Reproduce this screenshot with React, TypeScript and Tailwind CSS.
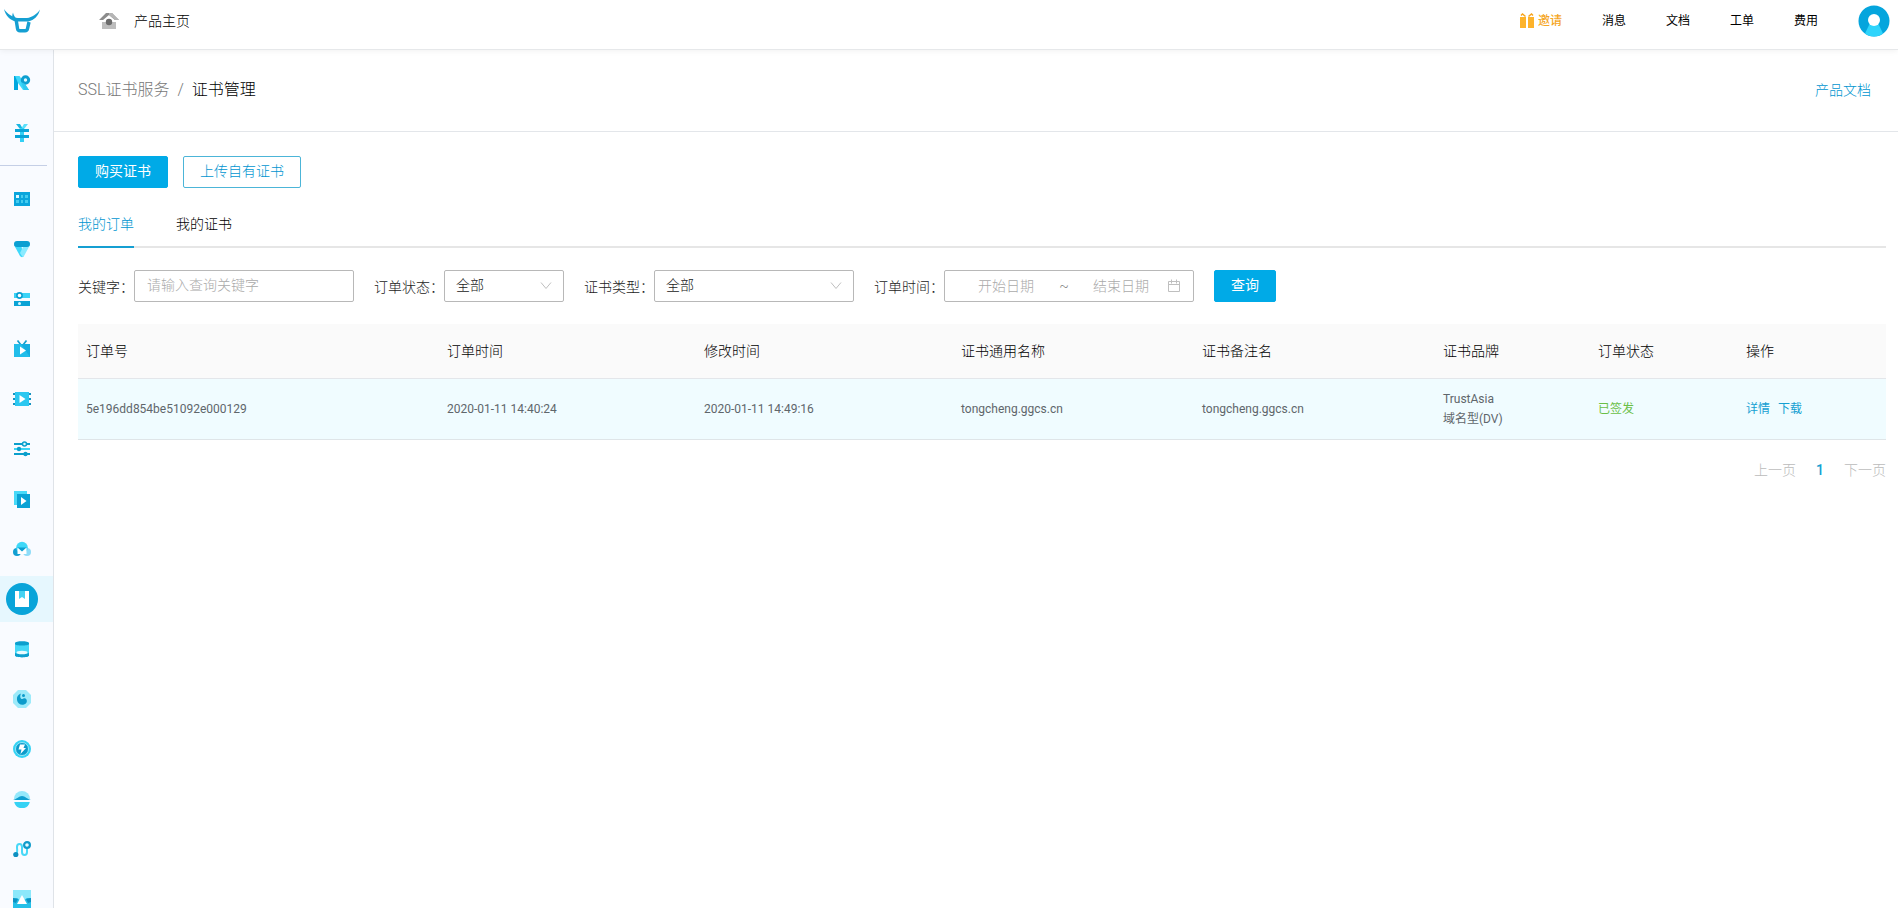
import { useState } from "react";
import type { ReactNode } from "react";

const topLinks = ["消息", "文档", "工单", "费用"];

const columns = [
  { label: "订单号", width: "w-[361px]" },
  { label: "订单时间", width: "w-[257px]" },
  { label: "修改时间", width: "w-[257px]" },
  { label: "证书通用名称", width: "w-[241px]" },
  { label: "证书备注名", width: "w-[241px]" },
  { label: "证书品牌", width: "w-[155px]" },
  { label: "订单状态", width: "w-[148px]" },
  { label: "操作", width: "w-[148px]" },
];

const orders = [
  {
    id: "5e196dd854be51092e000129",
    createdAt: "2020-01-11 14:40:24",
    updatedAt: "2020-01-11 14:49:16",
    commonName: "tongcheng.ggcs.cn",
    remark: "tongcheng.ggcs.cn",
    brand: "TrustAsia",
    type: "域名型(DV)",
    status: "已签发",
  },
];

const Svg = ({ children }: { children: ReactNode }) => (
  <svg viewBox="0 0 18 18" className="w-[18px] h-[18px]" aria-hidden="true">
    {children}
  </svg>
);

const accountIcons = [
  {
    name: "资源",
    icon: (
      <Svg>
        <path d="M1 2h4v14H1z" fill="#00a7de" />
        <path d="M2 2h4.500l9.500 14h-6L5 9z" fill="#3fd8fa" />
        <circle cx="12.500" cy="6" r="3.200" fill="#dff8ff" stroke="#0e9fd0" strokeWidth="3" />
        <path d="M8 8l4 2 4 6h-5z" fill="#2fc9f0" />
      </Svg>
    ),
  },
  {
    name: "费用",
    icon: (
      <Svg>
        <path d="M3 0h4l3 5H7z" fill="#18b6e2" />
        <path d="M11 0h4l-4 5H8z" fill="#5be0fb" />
        <path d="M7 4h4v14H7z" fill="#33d0f5" />
        <path d="M2 5h14v3H2zM2 11h14v3H2z" fill="#0aa5d8" />
      </Svg>
    ),
  },
];

const productIcons = [
  {
    name: "云主机",
    icon: (
      <Svg>
        <path d="M1 2h16v14H1z" fill="#0aa5dc" />
        <path d="M3 5h3v3H3z" fill="#e2f9ff" />
        <path d="M8 5h2v3H8zM12 5h3v3h-3zM3 10h3v3H3zM8 10h2v3H8zM12 10h3v3h-3z" fill="#45ccef" />
      </Svg>
    ),
  },
  {
    name: "对象存储",
    icon: (
      <Svg>
        <path d="M1 5l6 11c1 1.500 3 1.500 4 0L8 5z" fill="#3fd8fa" />
        <path d="M17 5l-6 11c-1 1-2 1-2 0l-2-3 4-8z" fill="#8aeaff" />
        <rect x="1" y="1" width="16" height="6" rx="3" fill="#0b9fd2" />
      </Svg>
    ),
  },
  {
    name: "CDN",
    icon: (
      <Svg>
        <path d="M1 3h16v5H1z" fill="#3bd3f6" />
        <path d="M1 11h16v5H1z" fill="#0aa3d6" />
        <circle cx="6.500" cy="5.500" r="2.600" fill="#fff" stroke="#0b9fd2" strokeWidth="1.600" />
        <circle cx="6.500" cy="13.500" r="1.500" fill="#d9f7ff" />
      </Svg>
    ),
  },
  {
    name: "直播云",
    icon: (
      <Svg>
        <path d="M4.500 0.500L8 5M13.500 0.500L10 5" stroke="#159fce" strokeWidth="1.700" />
        <path d="M1 4h16v13H1z" fill="#14ade0" />
        <path d="M1 4h7l9 13H1z" fill="#22bdea" />
        <path d="M7 6.500l6 4-6 4z" fill="#fff" />
      </Svg>
    ),
  },
  {
    name: "点播",
    icon: (
      <Svg>
        <path d="M0 3h18v2H0zM0 8h18v2H0zM0 13h18v2H0z" fill="#1593c2" />
        <path d="M2 2h14v14H2z" fill="#2cc7f0" />
        <path d="M6.500 5l6 4-6 4z" fill="#fff" />
      </Svg>
    ),
  },
  {
    name: "数据处理",
    icon: (
      <Svg>
        <path d="M1 4h16M1 14h16" stroke="#0b9fcc" strokeWidth="2" />
        <path d="M1 9h16" stroke="#3dd5f5" strokeWidth="2" />
        <circle cx="11.500" cy="4" r="2" fill="#e5faff" stroke="#0b9fcc" strokeWidth="1.500" />
        <circle cx="6" cy="9" r="2.200" fill="#0b9fcc" />
        <circle cx="12.500" cy="14" r="2.200" fill="#0b9fcc" />
      </Svg>
    ),
  },
  {
    name: "视频监控",
    icon: (
      <Svg>
        <path d="M1 1h13v14H1z" fill="#48d9f8" />
        <path d="M4 4h13v14H4z" fill="#0ba2d5" />
        <path d="M8 7l5.500 4L8 15z" fill="#fff" />
      </Svg>
    ),
  },
  {
    name: "云短信",
    icon: (
      <Svg>
        <circle cx="4" cy="12" r="4" fill="#129fd2" />
        <circle cx="14" cy="12" r="4" fill="#8fdcf8" />
        <circle cx="9" cy="7.500" r="5.800" fill="#3fd8f8" />
        <path d="M4.500 8h9v6h-9z" fill="#fff" />
        <path d="M4.500 7.500h9L9 11.500z" fill="#0b9fd2" />
      </Svg>
    ),
  },
  {
    name: "SSL证书服务",
    icon: (
      <svg viewBox="0 0 32 32" className="w-8 h-8" aria-hidden="true">
        <circle cx="16" cy="16" r="16" fill="#09a4d9" />
        <path d="M9 8h14v16H9z" fill="#fff" />
        <path d="M13 8h6v8l-3-2-3 2z" fill="#45d2f2" />
      </svg>
    ),
  },
  {
    name: "云数据库",
    icon: (
      <Svg>
        <path d="M2 3h14v12c0 2.500-14 2.500-14 0z" fill="#45d8f7" />
        <path d="M2 12.500c0 2 14 2 14 0v3c0 2.500-14 2.500-14 0z" fill="#0c9fce" />
        <ellipse cx="9" cy="12.500" rx="5.500" ry="1.800" fill="#e9fbff" />
        <path d="M2 3c0-2.500 14-2.500 14 0v1c0 2-14 2-14 0z" fill="#0c9fce" />
      </Svg>
    ),
  },
  {
    name: "大数据",
    icon: (
      <Svg>
        <path d="M5 0h8l5 5v8l-5 5H5l-5-5V5z" fill="#9deafa" />
        <path
          d="M8 3.500C5 4.500 3.500 7 4 10c.500 3.500 4 5.500 7 4.500 2.500-.800 3.500-3 2.500-5-1-1.600-3-1.500-4-.500C7.500 9.500 6.500 6.500 8 3.500z"
          fill="#0c9bcb"
        />
        <circle cx="10.500" cy="5.500" r="1.500" fill="#0c9bcb" />
      </Svg>
    ),
  },
  {
    name: "边缘计算",
    icon: (
      <Svg>
        <circle cx="9" cy="9" r="9" fill="#35d3f4" />
        <circle cx="9" cy="9" r="6.500" fill="#0c9bcb" stroke="#b5f1fc" strokeWidth="0.800" />
        <path d="M7 4.500h5L10.500 8H13l-5.500 6 1-4.500H5.500z" fill="#fff" />
      </Svg>
    ),
  },
  {
    name: "云网络",
    icon: (
      <Svg>
        <path d="M1 9a8 8 0 0 1 16 0z" fill="#95e8fb" />
        <path d="M0 10c4-1 6-4 9-4s5 3 9 4z" fill="#0e9ed0" />
        <path d="M1.200 12h15.600a8 8 0 0 1-15.600 0z" fill="#36d2f4" />
      </Svg>
    ),
  },
  {
    name: "智能路由",
    icon: (
      <Svg>
        <path
          d="M3 14c2-1 1-4 1-7 0-4 5-4 5 0v5c0 4 5 4 5 0V6"
          fill="none"
          stroke="#48d8f7"
          strokeWidth="2"
        />
        <circle cx="2.800" cy="14.500" r="2.600" fill="#0f8fc0" />
        <circle cx="14" cy="5" r="2.900" fill="#e5faff" stroke="#0f9bcb" strokeWidth="2.200" />
      </Svg>
    ),
  },
  {
    name: "图像服务",
    icon: (
      <Svg>
        <path d="M0 0h18v18H0z" fill="#8ce8fb" />
        <path d="M0 8h4l3 2h4l3-2h4v10H0z" fill="#25c0e8" />
        <path d="M0 8l5 1-2 4-3-1zM18 8l-5 1 2 4 3-1z" fill="#0c92c3" />
        <path d="M9 5l5 9H4z" fill="#fff" />
      </Svg>
    ),
  },
];

const Logo = () => (
  <svg viewBox="0 0 38 26" className="w-[38px] h-[26px]" aria-hidden="true">
    <path
      d="M1 1c1.500 7 6.500 11.500 12 12.500h12.500C31 12 35.500 8 37 1.500c-3 4.500-8 8-13 8.500h-9C9.500 9.500 4 5.500 1 1z"
      fill="#159fd2"
    />
    <path d="M10 4.500c.300 2 1.500 4 3 6l-2 1.500C9 10 8.800 7.500 10 4.500z" fill="#159fd2" />
    <path
      d="M13 11l1.500 9.500c.300 1.800 1 2.300 2.500 2.300h5c1.500 0 2.200-.500 2.500-2.300L26 14"
      fill="none"
      stroke="#159fd2"
      strokeWidth="3.400"
    />
  </svg>
);

const HomeIcon = () => (
  <svg viewBox="0 0 20 18" className="w-5 h-[18px]" aria-hidden="true">
    <path d="M3 10h14v7H3z" fill="#bdbdbd" />
    <path d="M7 1h6l7 7h-4l-6-5-6 5H0z" fill="#8c8c8c" />
    <path d="M10 1h3l7 7h-4l-6-5z" fill="#b5b5b5" />
    <circle cx="10" cy="10" r="3.200" fill="#6b6b6b" />
  </svg>
);

const GiftIcon = () => (
  <svg viewBox="0 0 14 16" className="w-[14px] h-4" aria-hidden="true">
    <path d="M0 4h6v11H0zM8 4h6v11H8z" fill="#fdb32b" />
    <path d="M1 2.500l1.500-1.500 3 2.500M13 2.500L11.500 1l-3 2.500" fill="none" stroke="#f7a51c" strokeWidth="1.500" />
  </svg>
);

const Chevron = () => (
  <svg
    viewBox="0 0 12 8"
    className="absolute right-3 top-3 w-3 h-2 pointer-events-none"
    aria-hidden="true"
  >
    <path d="M1 0.500l5 6 5-6" fill="none" stroke="#bfbfbf" />
  </svg>
);

const App = () => {
  const [tab, setTab] = useState("我的订单");
  const [keyword, setKeyword] = useState("");

  return (
    <div className="h-screen overflow-hidden flex flex-col bg-white text-[#222] text-sm font-light font-[Roboto,'Noto_Sans_CJK_SC',sans-serif]">
      {/* Top bar */}
      <header className="relative z-10 shrink-0 h-[50px] pb-2 pl-[3px] pr-2 flex items-center bg-white border-b border-[#e6e8ea] shadow-[0_1px_6px_rgba(0,0,0,0.06)]">
        <a href="#" aria-label="首页">
          <Logo />
        </a>
        <a href="#" className="ml-[58px] flex items-center gap-[15px] text-black">
          <HomeIcon />
          产品主页
        </a>
        <nav className="ml-auto flex items-center gap-10 text-xs text-black">
          <a href="#" className="flex items-center gap-1 font-medium text-[#f5a623]">
            <GiftIcon />
            邀请
          </a>
          {topLinks.map((link) => (
            <a key={link} href="#" className="font-normal">
              {link}
            </a>
          ))}
          <button type="button" aria-label="账户">
            <svg viewBox="0 0 32 32" className="w-8 h-8" aria-hidden="true">
              <circle cx="16" cy="16" r="15.500" fill="#05a5dd" />
              <path d="M12 18h8l5 10.500c-5 4-13 4-18 0z" fill="#2ed4fb" />
              <circle cx="16" cy="15" r="6" fill="#fff" />
            </svg>
          </button>
        </nav>
      </header>

      <div className="flex flex-1 min-h-0">
        {/* Side menu */}
        <aside className="w-[54px] shrink-0 overflow-hidden pt-[10px] bg-[#f9fbff] border-r border-[#dfe3e8]">
          <nav className="flex flex-col gap-1">
            {accountIcons.map((item) => (
              <a
                key={item.name}
                href="#"
                aria-label={item.name}
                className="h-[46px] shrink-0 w-full pr-[9px] flex items-center justify-center"
              >
                {item.icon}
              </a>
            ))}
          </nav>
          <hr className="mt-[9px] mb-[10px] mr-[6px] border-[#c5cfe6]" />
          <nav className="flex flex-col gap-1">
            {productIcons.map((item) => (
              <a
                key={item.name}
                href="#"
                aria-label={item.name}
                className={`h-[46px] shrink-0 w-full pr-[9px] flex items-center justify-center ${
                  item.name === "SSL证书服务" ? "bg-[#e6f7fe]" : ""
                }`}
              >
                {item.icon}
              </a>
            ))}
          </nav>
        </aside>

        <main className="flex-1 min-w-0">
          {/* Breadcrumb */}
          <div className="h-[82px] pb-[2px] pl-6 pr-[27px] flex items-center justify-between border-b border-[#e3e6ea]">
            <div className="flex items-center gap-2 text-base text-[#777]">
              <a href="#">SSL证书服务</a>
              <span>/</span>
              <h1 className="text-black">证书管理</h1>
            </div>
            <a href="#" className="text-[#0095d0]">
              产品文档
            </a>
          </div>

          <div className="pt-6 pl-6 pr-3">
            {/* Actions */}
            <div className="flex gap-[15px]">
              <button
                type="button"
                className="h-8 px-4 pb-[2px] rounded-xs border border-[#00aae7] bg-[#00aae7] font-normal text-white"
              >
                购买证书
              </button>
              <button
                type="button"
                className="h-8 px-4 pb-[2px] rounded-xs border border-[#4cb5d8] bg-white text-[#0095d0]"
              >
                上传自有证书
              </button>
            </div>

            {/* Tabs */}
            <div className="mt-3 h-12 flex gap-[42px] shadow-[inset_0_-2px_0_#e6e6e6]">
              {["我的订单", "我的证书"].map((name) => (
                <button
                  key={name}
                  type="button"
                  onClick={() => setTab(name)}
                  className={`pt-[2px] border-b-2 ${
                    tab === name
                      ? "border-[#159fd2] text-[#0095d0]"
                      : "border-transparent text-black"
                  }`}
                >
                  {name}
                </button>
              ))}
            </div>

            {/* Filters */}
            <form
              className="mt-[22px] flex flex-wrap items-center gap-5"
              onSubmit={(e) => e.preventDefault()}
            >
              <div className="flex items-center">
                <label htmlFor="keyword" className="pt-[2px]">
                  关键字：
                </label>
                <input
                  id="keyword"
                  type="text"
                  value={keyword}
                  onChange={(e) => setKeyword(e.target.value)}
                  placeholder="请输入查询关键字"
                  className="w-[220px] h-8 px-3 pb-[2px] rounded-xs border border-[#b8b8b8] placeholder:text-[#aaa] focus:outline-none"
                />
              </div>
              <div className="flex items-center">
                <label htmlFor="status" className="pt-[2px]">
                  订单状态：
                </label>
                <div className="relative">
                  <select
                    id="status"
                    className="block w-[120px] h-8 px-[11px] pb-[2px] appearance-none rounded-xs border border-[#b8b8b8] bg-white"
                  >
                    <option>全部</option>
                  </select>
                  <Chevron />
                </div>
              </div>
              <div className="flex items-center">
                <label htmlFor="type" className="pt-[2px]">
                  证书类型：
                </label>
                <div className="relative">
                  <select
                    id="type"
                    className="block w-[200px] h-8 px-[11px] pb-[2px] appearance-none rounded-xs border border-[#b8b8b8] bg-white"
                  >
                    <option>全部</option>
                  </select>
                  <Chevron />
                </div>
              </div>
              <div className="flex items-center">
                <label htmlFor="start" className="pt-[2px]">
                  订单时间：
                </label>
                <div className="relative flex items-center w-[250px] h-8 px-[11px] rounded-xs border border-[#b8b8b8]">
                  <input
                    id="start"
                    type="text"
                    placeholder="开始日期"
                    className="w-[100px] text-center placeholder:text-[#aaa] focus:outline-none"
                  />
                  <span className="w-4 text-center text-[#888]">~</span>
                  <input
                    type="text"
                    aria-label="结束日期"
                    placeholder="结束日期"
                    className="w-[98px] text-center placeholder:text-[#aaa] focus:outline-none"
                  />
                  <svg
                    viewBox="0 0 14 14"
                    className="absolute right-3 w-[14px] h-[14px]"
                    aria-hidden="true"
                  >
                    <path
                      d="M1.500 2.500h11v10h-11zM1.500 5.500h11M4.500 0.500v4M9.500 0.500v4"
                      fill="none"
                      stroke="#bfbfbf"
                    />
                  </svg>
                </div>
              </div>
              <button
                type="submit"
                className="h-8 px-4 pb-[2px] rounded-xs border border-[#00aae7] bg-[#00aae7] font-normal text-white"
              >
                查询
              </button>
            </form>

            {/* Orders */}
            <table className="mt-[22px] w-full table-fixed border-collapse text-left">
              <thead>
                <tr className="h-[54px] bg-[#fafafa] border-b border-[#e3e6ea] text-black">
                  {columns.map((col) => (
                    <th key={col.label} className={`${col.width} px-2 font-light`}>
                      {col.label}
                    </th>
                  ))}
                </tr>
              </thead>
              <tbody>
                {orders.map((order) => (
                  <tr
                    key={order.id}
                    className="h-[61px] bg-[#f0fcff] border-b border-[#dfe5e8] text-xs leading-5 font-normal text-[#5f666b]"
                  >
                    <td className="px-2">{order.id}</td>
                    <td className="px-2">{order.createdAt}</td>
                    <td className="px-2">{order.updatedAt}</td>
                    <td className="px-2">{order.commonName}</td>
                    <td className="px-2">{order.remark}</td>
                    <td className="px-2">
                      {order.brand}
                      <br />
                      {order.type}
                    </td>
                    <td className="px-2 text-[#6abf47]">{order.status}</td>
                    <td className="px-2 text-[#159fd2]">
                      <a href="#" className="mr-2">
                        详情
                      </a>
                      <a href="#">下载</a>
                    </td>
                  </tr>
                ))}
              </tbody>
            </table>

            {/* Pagination */}
            <div className="mt-5 flex justify-end items-center gap-5 text-[#bbb]">
              <button type="button" disabled>
                上一页
              </button>
              <button type="button" className="font-medium text-[#159fd2]">
                1
              </button>
              <button type="button" disabled>
                下一页
              </button>
            </div>
          </div>
        </main>
      </div>
    </div>
  );
};

export default App;
